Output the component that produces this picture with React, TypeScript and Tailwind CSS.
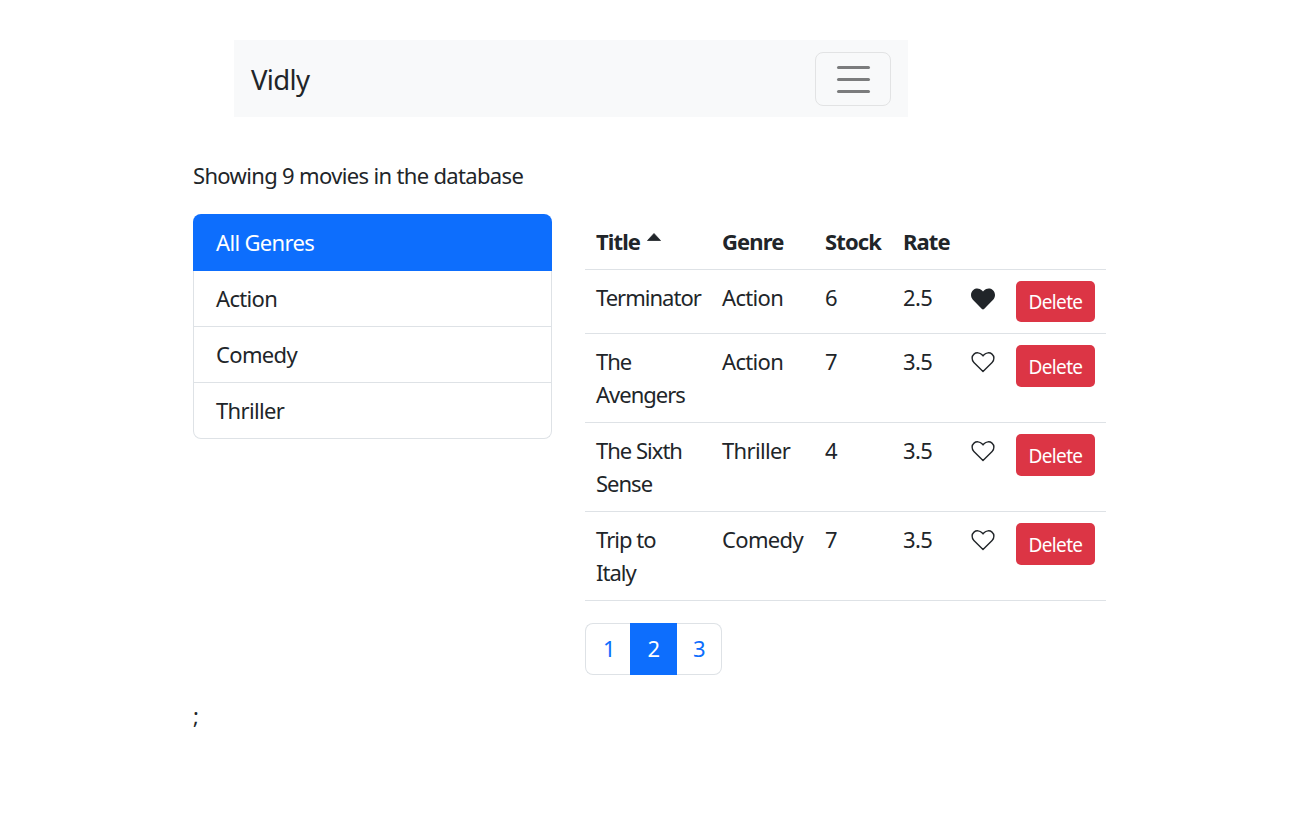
import React from 'react';
import { FaHeart } from 'react-icons/fa';

interface Movie {
  title: string;
  genre: string;
  stock: number;
  rate: string;
  liked: boolean;
}

const movies: Movie[] = [
  { title: 'Terminator', genre: 'Action', stock: 6, rate: '2.5', liked: true },
  { title: 'The Avengers', genre: 'Action', stock: 7, rate: '3.5', liked: false },
  { title: 'The Sixth Sense', genre: 'Thriller', stock: 4, rate: '3.5', liked: false },
  { title: 'Trip to\nItaly', genre: 'Comedy', stock: 7, rate: '3.5', liked: false },
];

const genres = ['All Genres', 'Action', 'Comedy', 'Thriller'];

const HeartOutline = () => (
  <svg viewBox="0 0 24 22" className="w-6 h-[22px]" fill="none" stroke="#212529" strokeWidth="1.4" strokeLinejoin="round">
    <path d="M12 20.6 2.9 11.4C.4 8.9.6 5.2 3 3.1c2.300-2 5.900-1.600 8 .7l1 1.100 1-1.100c2.100-2.300 5.700-2.700 8-.7 2.400 2.100 2.600 5.800.1 8.300L12 20.600z" />
  </svg>
);

const App: React.FC = () => {
  return (
    <div className="min-h-[837px] bg-white pt-10 px-[193px] text-[#212529] text-[22px] leading-[33px] tracking-[-0.03em] font-['Noto_Sans',sans-serif]">
      {/* Navbar */}
      <nav className="ml-[41px] w-[674px] h-[77px] bg-[#f8f9fa] flex items-center justify-between pl-[17px] pr-[17px]">
        <span className="text-[27.5px] leading-[41px] mt-[2px]">Vidly</span>
        <button className="w-[76px] h-[54px] mt-[1px] rounded-[8px] border border-[#e2e3e4] flex flex-col items-center justify-center gap-[9px]">
          <span className="block w-[33px] h-[3px] rounded-sm bg-[#7b7c7d]"></span>
          <span className="block w-[33px] h-[3px] rounded-sm bg-[#7b7c7d]"></span>
          <span className="block w-[33px] h-[3px] rounded-sm bg-[#7b7c7d]"></span>
        </button>
      </nav>

      <p className="mt-[42px] mb-[22px]">Showing 9 movies in the database</p>

      <div className="flex items-start">
        {/* Genres */}
        <ul className="w-[359px]">
          {genres.map((g, i) => (
            <li
              key={g}
              className={
                i === 0
                  ? 'h-[57px] pl-[23px] flex items-center rounded-t-[8px] bg-[#0d6efd] text-white'
                  : 'h-[56px] pl-[22px] flex items-center border-x border-b border-[#dee2e6] last:rounded-b-[8px]'
              }
            >
              {g}
            </li>
          ))}
        </ul>

        <div className="ml-[33px] w-[521px]">
          <table className="w-full table-fixed border-collapse text-left">
            <colgroup>
              <col className="w-[126px]" />
              <col className="w-[103px]" />
              <col className="w-[78px]" />
              <col className="w-[68px]" />
              <col className="w-[45px]" />
              <col className="w-[101px]" />
            </colgroup>
            <thead>
              <tr className="h-[55px] border-b border-[#dee2e6]">
                <th className="px-[11px] font-bold tracking-[-0.04em]">
                  <span className="inline-flex items-center gap-[7px]">
                    Title
                    <svg viewBox="0 0 14 8" className="w-[14px] h-[8px] mb-[9px]" fill="#212529">
                      <path d="M7 0.500 13.500 7.500H0.500Z" stroke="#212529" strokeWidth="0.800" strokeLinejoin="round" />
                    </svg>
                  </span>
                </th>
                <th className="px-[11px] font-bold tracking-[-0.04em]">Genre</th>
                <th className="px-[11px] font-bold tracking-[-0.04em]">Stock</th>
                <th className="px-[11px] font-bold tracking-[-0.04em]">Rate</th>
                <th></th>
                <th></th>
              </tr>
            </thead>
            <tbody>
              {movies.map((m, i) => (
                <tr key={m.title} className="border-b border-[#dee2e6] align-top">
                  <td className="px-[11px] pt-[11px] pb-[11px] tracking-[-0.045em] whitespace-pre-line">{m.title}</td>
                  <td className="px-[11px] pt-[11px]">{m.genre}</td>
                  <td className="px-[11px] pt-[11px]">{m.stock}</td>
                  <td className="px-[11px] pt-[11px]">{m.rate}</td>
                  <td className="px-[11px] pt-[17px]">
                    {m.liked ? <FaHeart className="w-6 h-6" color="#212529" /> : <HeartOutline />}
                  </td>
                  <td className="px-[11px] pt-[11px] pb-[11px]">
                    <button className={`block w-[79px] rounded-[5px] bg-[#dc3545] text-white text-[19px] leading-[28px] pt-[2px] ${i === 0 ? 'h-[41px]' : 'h-[42px]'}`}>
                      Delete
                    </button>
                  </td>
                </tr>
              ))}
            </tbody>
          </table>

          {/* Pagination */}
          <div className="mt-[22px] flex w-[137px] h-[52px]">
            <span className="w-[45px] pl-[2px] flex items-center justify-center rounded-l-[8px] border-y border-l border-[#dee2e6] text-[#0d6efd]">1</span>
            <span className="w-[47px] flex items-center justify-center bg-[#0d6efd] text-white">2</span>
            <span className="w-[45px] flex items-center justify-center rounded-r-[8px] border-y border-r border-[#dee2e6] text-[#0d6efd]">3</span>
          </div>
        </div>
      </div>

      <p className="mt-[24px]">;</p>
    </div>
  );
};

export default App;
